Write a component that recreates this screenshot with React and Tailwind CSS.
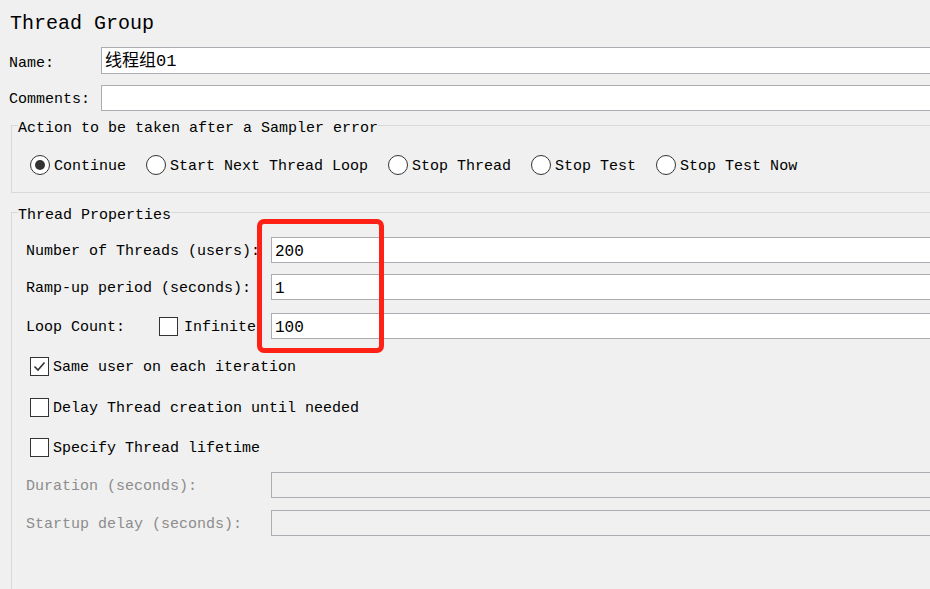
import React from "react";

const mono = { fontFamily: '"Liberation Mono", "Noto Sans CJK SC", monospace' };

function Radio({ checked, label }) {
  return (
    <div className="flex items-center gap-[4px]">
      <div className="w-[20px] h-[20px] rounded-full border border-[#333333] bg-white flex items-center justify-center">
        {checked && <div className="w-[10px] h-[10px] rounded-full bg-[#333333]" />}
      </div>
      <span className="translate-y-[2px] text-[15px] leading-[20px] text-black whitespace-pre">{label}</span>
    </div>
  );
}

function Check({ checked }) {
  return (
    <div className="w-[19px] h-[19px] border border-[#333333] bg-white flex items-center justify-center shrink-0">
      {checked && (
        <svg width="15" height="15" viewBox="0 0 15 15">
          <path d="M2.5 7.5 L6 11 L12.5 3.5" fill="none" stroke="#333333" strokeWidth="1.6" />
        </svg>
      )}
    </div>
  );
}

function Field({ label, value, disabled, extra, mt }) {
  return (
    <div className={`flex items-center pl-[14px] ${mt || ""}`}>
      <div className={`w-[245px] flex items-center text-[15px] leading-[20px] ${disabled ? "text-[#8c8c8c]" : "text-black"}`}>
        {extra ? extra : <span className="translate-y-[2px] whitespace-pre">{label}</span>}
      </div>
      <div
        className={`flex-1 h-[26px] border border-r-0 border-[#abadb3] flex items-center pl-[3px] text-[16px] text-black ${disabled ? "bg-[#f0f0f0]" : "bg-white"}`}
      >
        <span className="translate-y-[2px]">{value}</span>
      </div>
    </div>
  );
}

export default function App() {
  return (
    <div className="relative w-[930px] h-[589px] overflow-hidden bg-[#f0f0f0] text-black" style={mono}>
      <div className="mt-[8px] h-[28px] pl-[10px] text-[20px] leading-[28px]">
        <span className="inline-block translate-y-[2px]">Thread Group</span>
      </div>

      <div className="mt-[11px] flex items-center h-[27px]">
        <div className="w-[101px] pl-[9px] text-[15px] leading-[20px]">
          <span className="inline-block translate-y-[3px]">Name:</span>
        </div>
        <div className="flex-1 h-[27px] border border-r-0 border-[#abadb3] bg-white flex items-center pl-[3px] text-[17px]">
          <span className="translate-y-[1px]">线程组01</span>
        </div>
      </div>
      <div className="mt-[11px] flex items-center h-[26px]">
        <div className="w-[101px] pl-[9px] text-[15px] leading-[20px]">
          <span className="inline-block translate-y-[2px]">Comments:</span>
        </div>
        <div className="flex-1 h-[26px] border border-r-0 border-[#abadb3] bg-white" />
      </div>

      <div className="relative mt-[14px] ml-[11px] h-[68px] border border-r-0 border-[#d9d9d9]">
        <span className="absolute left-[6px] top-[-6px] bg-[#f0f0f0] text-[15px] leading-[17px] whitespace-pre">
          Action to be taken after a Sampler error
        </span>
        <div className="pt-[29px] pl-[18px] flex items-center gap-[20px]">
          <Radio checked label="Continue" />
          <Radio label="Start Next Thread Loop" />
          <Radio label="Stop Thread" />
          <Radio label="Stop Test" />
          <Radio label="Stop Test Now" />
        </div>
      </div>

      <div className="relative mt-[19px] ml-[11px] h-[400px] border border-r-0 border-b-0 border-[#d9d9d9]">
        <span className="absolute left-[6px] top-[-6px] bg-[#f0f0f0] text-[15px] leading-[17px] whitespace-pre">
          Thread Properties
        </span>
        <div className="pt-[24px]">
          <Field label="Number of Threads (users):" value="200" />
          <Field label="Ramp-up period (seconds):" value="1" mt="mt-[11px]" />
          <Field
            mt="mt-[13px]"
            value="100"
            extra={
              <div className="flex items-center">
                <span className="w-[133px] translate-y-[2px]">Loop Count:</span>
                <Check />
                <span className="ml-[6px] translate-y-[2px]">Infinite</span>
              </div>
            }
          />
          <div className="mt-[17px] pl-[18px] flex items-center gap-[4px] h-[20px]">
            <Check checked />
            <span className="translate-y-[2px] text-[15px] whitespace-pre">Same user on each iteration</span>
          </div>
          <div className="mt-[21px] pl-[18px] flex items-center gap-[4px] h-[20px]">
            <Check />
            <span className="translate-y-[2px] text-[15px] whitespace-pre">Delay Thread creation until needed</span>
          </div>
          <div className="mt-[20px] pl-[18px] flex items-center gap-[4px] h-[20px]">
            <Check />
            <span className="translate-y-[2px] text-[15px] whitespace-pre">Specify Thread lifetime</span>
          </div>
          <Field label="Duration (seconds):" disabled mt="mt-[15px]" />
          <Field label="Startup delay (seconds):" disabled mt="mt-[12px]" />
        </div>
      </div>

      <div className="absolute left-[257px] top-[219px] w-[127px] h-[134px] border-[5px] border-[#ff2016] rounded-[7px]" />
    </div>
  );
}
